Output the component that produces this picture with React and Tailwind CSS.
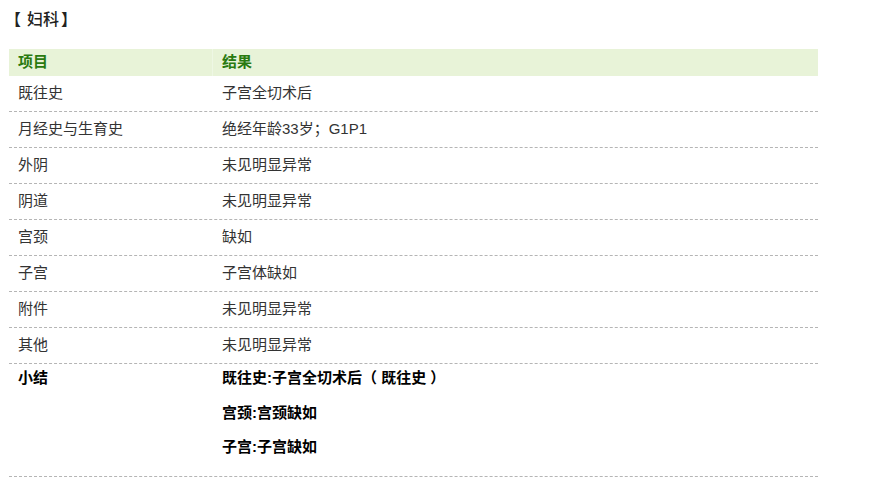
export default function App() {
  const rows = [
    ["既往史", "子宫全切术后"],
    ["月经史与生育史", "绝经年龄33岁；G1P1"],
    ["外阴", "未见明显异常"],
    ["阴道", "未见明显异常"],
    ["宫颈", "缺如"],
    ["子宫", "子宫体缺如"],
    ["附件", "未见明显异常"],
    ["其他", "未见明显异常"],
  ];
  const font = { fontFamily: '"Liberation Sans", "Noto Sans CJK SC", sans-serif' };
  return (
    <div className="w-[882px] h-[481px] bg-white text-[#333] text-[15px] overflow-hidden" style={font}>
      <div className="pl-[5px] pt-[9px] h-[49px] text-[16px] font-medium leading-[22px] text-[#222] flex">
        <span>【</span>
        <span className="ml-[6px]">妇科</span>
        <span className="ml-[2px]">】</span>
      </div>
      <div className="ml-[9px] w-[809px]">
        <div className="flex h-[27px] bg-[#e8f3d8] text-[#2a7a10] font-bold items-center">
          <div className="w-[204px] pl-[9px] h-full flex items-center border-r border-[#eef7e4]">项目</div>
          <div className="pl-[9px]">结果</div>
        </div>
        {rows.map(([a, b]) => (
          <div key={a} className="flex h-[36px] items-center border-b border-dashed border-[#b5b5b5]">
            <div className="w-[204px] pl-[9px]">{a}</div>
            <div className="pl-[9px]">{b}</div>
          </div>
        ))}
        <div className="flex border-b border-dashed border-[#b5b5b5] pt-[1px] pb-[16px] font-bold text-black">
          <div className="w-[204px] pl-[9px] leading-[26px]">小结</div>
          <div className="pl-[9px] flex flex-col gap-[8.5px] leading-[26px]">
            <div>既往史:子宫全切术后（ 既往史 ）</div>
            <div>宫颈:宫颈缺如</div>
            <div>子宫:子宫缺如</div>
          </div>
        </div>
      </div>
    </div>
  );
}
